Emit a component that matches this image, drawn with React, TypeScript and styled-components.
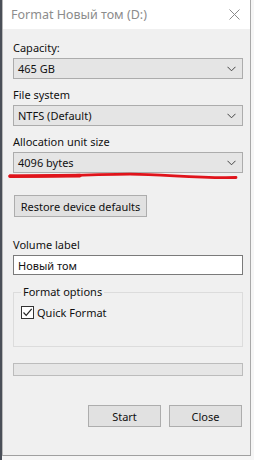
import React from "react"
import styled, { createGlobalStyle } from "styled-components"

const GlobalStyle = createGlobalStyle`
  html, body {
    margin: 0;
    padding: 0;
    background: #ececec;
  }
  body {
    font-family: "Noto Sans", "Open Sans", sans-serif;
    font-size: 11px;
    color: #111;
  }
`

interface ComboProps {
  value: string
}

const Combo = ({ value }: ComboProps) => (
  <ComboBox>
    <span>{value}</span>
    <svg width="9" height="6" viewBox="0 0 9 6">
      <path d="M0.5 0.8 L4.5 4.8 L8.5 0.8" fill="none" stroke="#444" strokeWidth="1" />
    </svg>
  </ComboBox>
)

const App = () => {
  return (
    <Desktop>
      <GlobalStyle />
      <Window>
        <TitleBar>
          <Title>Format Новый том (D:)</Title>
          <svg width="11" height="11" viewBox="0 0 11 11">
            <path d="M0.5 0.5 L10.5 10.5 M10.5 0.5 L0.5 10.5" stroke="#8a8a8a" strokeWidth="1" />
          </svg>
        </TitleBar>
        <Body>
          <Field>
            <Label>Capacity:</Label>
            <Combo value="465 GB" />
          </Field>
          <Field>
            <Label>File system</Label>
            <Combo value="NTFS (Default)" />
          </Field>
          <Field>
            <Label>Allocation unit size</Label>
            <Combo value="4096 bytes" />
          </Field>
          <RestoreButton>Restore device defaults</RestoreButton>
          <VolumeField>
            <Label>Volume label</Label>
            <TextInput defaultValue="Новый том" />
          </VolumeField>
          <Group>
            <Legend>Format options</Legend>
            <CheckRow>
              <CheckBox>
                <svg width="11" height="11" viewBox="0 0 11 11">
                  <path d="M1.5 5.5 L4.2 8.3 L9.7 1.8" fill="none" stroke="#222" strokeWidth="1.2" />
                </svg>
              </CheckBox>
              Quick Format
            </CheckRow>
          </Group>
          <Progress />
          <ButtonRow>
            <Button>Start</Button>
            <Button>Close</Button>
          </ButtonRow>
        </Body>
        <Scribble width="254" height="12" viewBox="0 0 254 12">
          <path d="M10 5 C 50 6, 95 3.2, 130 3.2 C 165 3.2, 195 7.5, 236 6.5" fill="none" stroke="#e0141b" strokeWidth="2.8" strokeLinecap="round" />
          <path d="M10 5.2 L 80 4.6" fill="none" stroke="#e0141b" strokeWidth="3.6" strokeLinecap="round" />
        </Scribble>
      </Window>
    </Desktop>
  )
}

const Desktop = styled.div`
  width: 254px;
  height: 460px;
  overflow: hidden;
  background: #f6f6f6;
  border-left: 2px solid #4a4f58;
  box-sizing: border-box;
`

const Window = styled.div`
  position: relative;
  width: 249px;
  height: 456px;
  box-sizing: border-box;
  border-left: 1px solid #b8b8b8;
  border-right: 1px solid #a8a8a8;
  border-bottom: 1px solid #a0a0a0;
  background: #f0f0f0;
  display: flex;
  flex-direction: column;
`

const TitleBar = styled.div`
  height: 29px;
  flex-shrink: 0;
  background: #fff;
  display: flex;
  align-items: center;
  justify-content: space-between;
  padding: 0 10px 0 8px;
`

const Title = styled.div`
  color: #8c8c8c;
  font-size: 12.5px;
`

const Body = styled.div`
  flex: 1;
  display: flex;
  flex-direction: column;
  padding: 11px 7px 0 10px;
`

const Field = styled.div`
  display: flex;
  flex-direction: column;
  margin-bottom: 8px;
`

const Label = styled.div`
  line-height: 16px;
  margin-bottom: 2px;
`

const ComboBox = styled.div`
  height: 21px;
  box-sizing: border-box;
  border: 1px solid #acacac;
  background: #e5e5e5;
  display: flex;
  align-items: center;
  justify-content: space-between;
  padding: 0 6px 0 4px;
`

const RestoreButton = styled.div`
  align-self: flex-start;
  margin: 14px 0 0 1px;
  width: 133px;
  height: 22px;
  box-sizing: border-box;
  border: 1px solid #adadad;
  background: #e1e1e1;
  display: flex;
  align-items: center;
  justify-content: center;
`

const VolumeField = styled(Field)`
  margin-top: 20px;
`

const TextInput = styled.input`
  height: 20px;
  box-sizing: border-box;
  border: 1px solid #7a7a7a;
  background: #fff;
  font: inherit;
  color: #111;
  padding: 0 4px;
  outline: none;
`

const Group = styled.fieldset`
  margin: 2px 0 0 0;
  height: 62px;
  box-sizing: border-box;
  border: 1px solid #dcdcdc;
  padding: 0 7px;
`

const Legend = styled.legend`
  padding: 0 2px;
  line-height: 14px;
`

const CheckRow = styled.div`
  display: flex;
  align-items: center;
  gap: 3px;
  margin-top: 6px;
`

const CheckBox = styled.div`
  width: 13px;
  height: 13px;
  box-sizing: border-box;
  border: 1px solid #333;
  background: #fff;
  display: flex;
  align-items: center;
  justify-content: center;
`

const Progress = styled.div`
  margin-top: 16px;
  height: 13px;
  box-sizing: border-box;
  border: 1px solid #bcbcbc;
  background: #e6e6e6;
`

const ButtonRow = styled.div`
  display: flex;
  justify-content: flex-end;
  gap: 8px;
  margin-top: 29px;
  padding-right: 1px;
`

const Button = styled.div`
  width: 73px;
  height: 22px;
  box-sizing: border-box;
  border: 1px solid #adadad;
  background: #e1e1e1;
  display: flex;
  align-items: center;
  justify-content: center;
`

const Scribble = styled.svg`
  position: absolute;
  left: -3px;
  top: 171px;
`

export default App
